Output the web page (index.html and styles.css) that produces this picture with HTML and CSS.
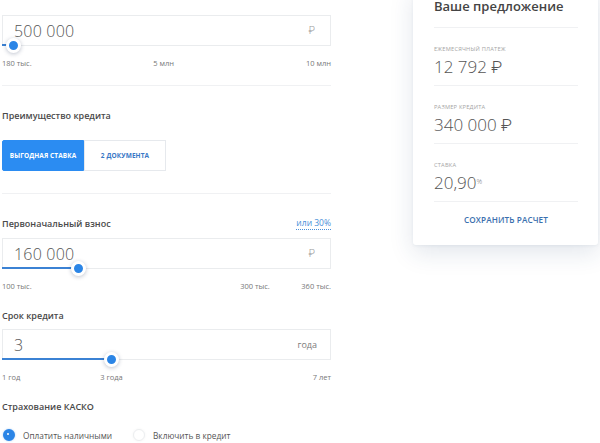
FILE: index.html
```html
<!DOCTYPE html>
<html lang="ru">
<head>
<meta charset="utf-8">
<link rel="stylesheet" href="styles.css">
</head>
<body>
<div class="page">
  <div class="form">
    <div class="field first">
      <div class="input">
        <span class="value">500 000</span>
        <span class="unit rub">₽</span>
        <div class="fill" style="width: 3.3%"></div>
        <div class="knob" style="left: 3.3%"></div>
      </div>
      <div class="scale">
        <span>180 тыс.</span>
        <span class="mid" style="left: 49.1%">5 млн</span>
        <span>10 млн</span>
      </div>
    </div>

    <div class="divider"></div>

    <div class="heading h-adv">Преимущество кредита</div>
    <div class="tabs">
      <button class="tab active">Выгодная ставка</button>
      <button class="tab">2 документа</button>
    </div>

    <div class="divider d2"></div>

    <div class="field">
      <div class="heading row">
        <span>Первоначальный взнос</span>
        <a class="pct">или 30%</a>
      </div>
      <div class="input">
        <span class="value">160 000</span>
        <span class="unit rub">₽</span>
        <div class="fill" style="width: 23.1%"></div>
        <div class="knob" style="left: 23.1%"></div>
      </div>
      <div class="scale">
        <span>100 тыс.</span>
        <span class="mid" style="left: 76.9%">300 тыс.</span>
        <span>360 тыс.</span>
      </div>
    </div>

    <div class="field gap">
      <div class="heading">Срок кредита</div>
      <div class="input">
        <span class="value">3</span>
        <span class="unit">года</span>
        <div class="fill" style="width: 33.3%"></div>
        <div class="knob" style="left: 33.3%"></div>
      </div>
      <div class="scale">
        <span>1 год</span>
        <span class="mid" style="left: 33.3%">3 года</span>
        <span>7 лет</span>
      </div>
    </div>

    <div class="heading gap">Страхование КАСКО</div>
    <div class="radios">
      <label class="radio on"><span class="dot"></span>Оплатить наличными</label>
      <label class="radio"><span class="dot"></span>Включить в кредит</label>
    </div>
  </div>

  <aside class="card">
    <div class="card-title">Ваше предложение</div>
    <div class="item">
      <div class="label">Ежемесячный платеж</div>
      <div class="amount">12 792 <span class="rb">₽</span></div>
    </div>
    <div class="item">
      <div class="label">Размер кредита</div>
      <div class="amount">340 000 <span class="rb">₽</span></div>
    </div>
    <div class="item">
      <div class="label">Ставка</div>
      <div class="amount">20,90<sup>%</sup></div>
    </div>
    <div class="save">Сохранить расчет</div>
  </aside>
</div>
</body>
</html>
```

FILE: styles.css
```css
* { box-sizing: border-box; }

html, body {
  margin: 0;
  padding: 0;
  background: #ffffff;
  overflow: hidden;
}

body {
  font-family: "Open Sans", "Liberation Sans", sans-serif;
  color: #444;
  width: 600px;
  height: 443px;
}

.page {
  display: flex;
  align-items: flex-start;
}

.form {
  width: 329px;
  margin-left: 2px;
  padding-top: 15px;
}

.field.gap { margin-top: 18px; }

.input {
  position: relative;
  height: 31px;
  border: 1px solid #eaecee;
  display: flex;
  align-items: center;
  justify-content: space-between;
  padding: 0 12px 0 11px;
}

.value {
  font-size: 16px;
  font-weight: 300;
  color: #555;
  letter-spacing: 0.2px;
}

.unit {
  font-size: 9px;
  color: #7a7a7a;
  padding-right: 1px;
}

.unit.rub {
  font-family: "Roboto", "Noto Sans", sans-serif;
  font-weight: 300;
  font-size: 10px;
  color: #9a9a9a;
  padding-right: 3px;
}

.fill {
  position: absolute;
  left: -1px;
  bottom: -1px;
  height: 2px;
  background: #3b82d4;
}

.knob {
  position: absolute;
  bottom: -8px;
  width: 15px;
  height: 15px;
  margin-left: -8px;
  border-radius: 50%;
  background: #2b85e6;
  border: 3px solid #fff;
  box-shadow: 0 1px 4px rgba(20, 40, 80, 0.28);
}

.scale {
  position: relative;
  margin-top: 12px;
  height: 10px;
  line-height: 10px;
  display: flex;
  justify-content: space-between;
  font-size: 7.5px;
  color: #777;
}

.scale .mid {
  position: absolute;
  top: 0;
  transform: translateX(-50%);
  white-space: nowrap;
}

.divider {
  height: 1px;
  background: #f0f1f3;
  margin-top: 17px;
}

.divider.d2 { margin-top: 22px; }

.heading {
  font-size: 9px;
  font-weight: 600;
  color: #4a4a4a;
  line-height: 14px;
  height: 14px;
}

.heading.h-adv { margin-top: 23px; }
.heading.gap { margin-top: 18px; }

.heading.row {
  display: flex;
  justify-content: space-between;
  margin-top: 23px;
  margin-bottom: 7px;
}

.field.gap .heading { margin-bottom: 6px; }

.pct {
  font-weight: 400;
  font-size: 8.5px;
  color: #4a8fd8;
  border-bottom: 1px dotted #4a8fd8;
  line-height: 12px;
  height: 13px;
}

.tabs {
  display: flex;
  margin-top: 17px;
}

.tab {
  width: 82px;
  height: 31px;
  border: 1px solid #e6e9ed;
  background: #fff;
  font-family: inherit;
  font-size: 6.5px;
  font-weight: 700;
  text-transform: uppercase;
  color: #3a78c6;
  padding: 0;
  letter-spacing: 0.1px;
}

.tab.active {
  background: #2b8cf2;
  border-color: #2b8cf2;
  color: #fff;
  border-radius: 2px 0 0 2px;
}

.radios {
  display: flex;
  align-items: center;
  margin-top: 14px;
  height: 14px;
  font-size: 8.3px;
  color: #555;
}

.radio {
  display: flex;
  align-items: center;
}

.radio + .radio { margin-left: 20px; }

.dot {
  width: 12px;
  height: 12px;
  border-radius: 50%;
  margin-left: 1px;
  margin-right: 8px;
  border: 1px solid #eceef0;
  box-shadow: 0 0 3px rgba(0, 0, 0, 0.05);
  background: #fff;
}

.radio.on .dot {
  background: #2b85e6;
  border: 4px solid #2b85e6;
  box-shadow: 0 0 2px rgba(43, 133, 230, 0.4);
  position: relative;
}

.radio.on .dot::after {
  content: "";
  position: absolute;
  left: 0;
  top: 0;
  width: 2px;
  height: 2px;
  border-radius: 50%;
  background: #fff;
}

.card {
  width: 185px;
  margin-left: 82px;
  margin-top: -13px;
  background: #fff;
  border-radius: 3px;
  box-shadow: 0 8px 24px rgba(30, 60, 110, 0.13), 0 1px 3px rgba(30, 60, 110, 0.06);
  padding: 11px 20px 19px 21px;
}

.card-title {
  font-size: 13px;
  font-weight: 600;
  color: #444;
  line-height: 16px;
  padding-bottom: 13px;
  border-bottom: 1px solid #f0f1f3;
  white-space: nowrap;
}

.item {
  padding: 17px 0 7px;
  border-bottom: 1px solid #f0f1f3;
}

.label {
  font-size: 5.7px;
  text-transform: uppercase;
  color: #a5a5a5;
  line-height: 8px;
  letter-spacing: 0.2px;
}

.amount {
  margin-top: 3px;
  font-size: 17px;
  font-weight: 300;
  color: #555;
  line-height: 22px;
  white-space: nowrap;
}

.amount .rb {
  font-family: "Roboto", "Noto Sans", sans-serif;
  font-weight: 300;
}

.amount sup {
  font-size: 7px;
  vertical-align: top;
  position: relative;
  top: -1px;
  color: #777;
}

.save {
  margin-top: 12px;
  text-align: center;
  font-size: 8.2px;
  font-weight: 600;
  text-transform: uppercase;
  color: #3a6fae;
  line-height: 12px;
  letter-spacing: 0.1px;
}
```
